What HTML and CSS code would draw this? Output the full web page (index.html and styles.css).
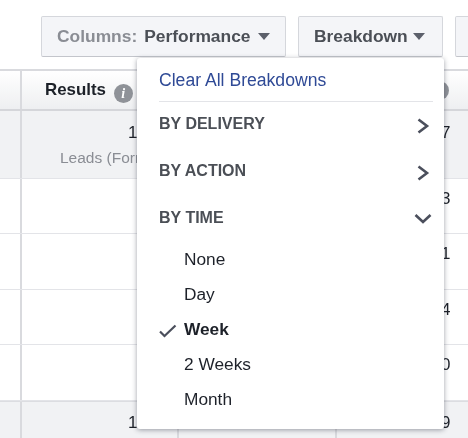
FILE: index.html
```html
<!DOCTYPE html>
<html lang="en">
<head>
<meta charset="utf-8">
<title>Breakdown menu</title>
<link rel="stylesheet" href="styles.css">
</head>
<body>
<div class="page">
  <div class="toolbar">
    <button class="btn btn-columns"><span class="muted">Columns:</span><span>Performance</span><span class="caret"></span></button>
    <button class="btn btn-breakdown"><span>Breakdown</span><span class="caret"></span></button>
    <button class="btn btn-stub"></button>
  </div>
  <div class="table">
    <div class="row head">
      <div class="c0"></div>
      <div class="c1"><b>Results</b> <span class="info">i</span></div>
      <div class="c2"></div>
      <div class="c3"><span class="info info-r"></span></div>
    </div>
    <div class="row r1 shade">
      <div class="c0"></div>
      <div class="c1"><span class="num">1</span><span class="sub">Leads (Form)</span></div>
      <div class="c2"></div>
      <div class="c3"><span class="num">7</span><span class="sub">.</span></div>
    </div>
    <div class="row r2"><div class="c0"></div><div class="c1"></div><div class="c2"></div><div class="c3"><span class="num">3</span></div></div>
    <div class="row r3"><div class="c0"></div><div class="c1"></div><div class="c2"></div><div class="c3"><span class="num">1</span></div></div>
    <div class="row r2"><div class="c0"></div><div class="c1"></div><div class="c2"></div><div class="c3"><span class="num">4</span></div></div>
    <div class="row r3"><div class="c0"></div><div class="c1"></div><div class="c2"></div><div class="c3"><span class="num">0</span></div></div>
    <div class="row total shade"><div class="c0"></div><div class="c1"><span class="num">1</span></div><div class="c2"></div><div class="c3"><span class="num">9</span></div></div>
  </div>
  <div class="menu">
    <a class="clear">Clear All Breakdowns</a>
    <div class="section first">BY DELIVERY
      <svg class="chev" width="14" height="18" viewBox="0 0 14 18"><path d="M2.500 2.500l8.500 6.500-8.500 6.500" fill="none" stroke="#4b4f5c" stroke-width="2.600"/></svg>
    </div>
    <div class="section">BY ACTION
      <svg class="chev" width="14" height="18" viewBox="0 0 14 18"><path d="M2.500 2.500l8.500 6.500-8.500 6.500" fill="none" stroke="#4b4f5c" stroke-width="2.600"/></svg>
    </div>
    <div class="section">BY TIME
      <svg class="chev down" width="18" height="12" viewBox="0 0 18 12"><path d="M1.500 2l7.500 7 7.500-7" fill="none" stroke="#4b4f5c" stroke-width="2.600"/></svg>
    </div>
    <ul class="options">
      <li>None</li>
      <li>Day</li>
      <li class="on"><svg class="check" width="18" height="14" viewBox="0 0 18 14"><path d="M1 7.500l4.500 4.500 11-10.500" fill="none" stroke="#4b4f5c" stroke-width="2.200"/></svg>Week</li>
      <li>2 Weeks</li>
      <li>Month</li>
    </ul>
  </div>
</div>
</body>
</html>
```
FILE: styles.css
```css
* { box-sizing: border-box; }
html, body { margin: 0; padding: 0; background: #fff; }
body { font-family: "Liberation Sans", Arial, sans-serif; color: #1d2129; overflow: hidden; }
.page { position: relative; width: 468px; height: 438px; overflow: hidden; filter: blur(0.35px); }

.toolbar { display: flex; gap: 12px; padding: 16px 0 0 41px; height: 69px; }
.btn {
  flex: none; height: 41px; border: 1px solid #d5d7dc; border-bottom-color: #c3c5cb; border-radius: 2px;
  background: #f4f5f8; font: bold 17.400px "Liberation Sans", Arial, sans-serif; color: #4b4f56;
  padding: 0 0 0 15px; display: flex; align-items: center; gap: 7px; white-space: pre;
}
.btn-columns { width: 245px; }
.btn-breakdown { width: 145px; gap: 5px; }
.btn-stub { width: 40px; }
.muted { color: #8a8d94; }
.caret { width: 0; height: 0; border: 6.500px solid transparent; border-top: 7px solid #5c606b; border-bottom: 0; }

.table { border-top: 2px solid #d9dade; }
.row { display: grid; grid-template-columns: 22px 157px 158px 1fr; border-bottom: 1px solid #e3e4e8; }
.row > div { border-right: 2px solid #d9dade; position: relative; }
.row > .c3 { border-right: 0; }
.head { height: 40px; background: linear-gradient(#fff, #eeeff1); border-bottom: 2px solid #d5d6da; }
.head .c1 { padding: 9px 0 0 23px; font-size: 16.900px; color: #1d2129; white-space: nowrap; }
.info {
  display: inline-block; width: 19px; height: 19px; margin-left: 3px; border-radius: 50%; background: #8f9298; color: #fff;
  font: bold italic 14px/19px "Liberation Serif", serif; text-align: center; vertical-align: -3px;
}
.info-r { position: absolute; left: 90px; top: 10px; }
.shade { background: #f1f2f4; }
.r1 { height: 68px; }
.r2 { height: 55px; }
.r3 { height: 56px; }
.total { height: 40px; border-bottom: 0; border-top: 1px solid #dcdde1; }
.num { display: block; font-size: 17px; line-height: 20px; margin-top: 10px; color: #1d2129; }
.r1 .num { margin-top: 12px; }
.sub { display: block; font-size: 15.500px; line-height: 18px; margin-top: 6px; color: #8a8d94; white-space: nowrap; }
.c1 .num { padding-left: 106px; }
.c1 .sub { padding-left: 38px; }
.c3 .num, .c3 .sub { padding-left: 104px; }
.total .num { margin-top: 11px; }

.menu {
  position: absolute; left: 137px; top: 58px; width: 307px; height: 371px; background: #fff;
  border-radius: 3px; box-shadow: 0 1px 5px rgba(40, 45, 60, 0.45); padding: 12px 11px 0 22px;
}
.clear { display: block; font-size: 17.600px; line-height: 20px; color: #2f4a96; padding-bottom: 11px; border-bottom: 1px solid #e3e4e8; }
.section {
  display: flex; justify-content: space-between; align-items: center; height: 20px; margin-top: 27px;
  font-size: 16px; font-weight: bold; color: #4b4f56;
}
.section.first { margin-top: 12px; }
.section .chev { margin: 3px 3px 0 0; }
.section .chev.down { margin: 1px 1px 0 0; }
.options { list-style: none; margin: 21px 0 0; padding: 0 0 0 25px; }
.options li { position: relative; height: 35px; line-height: 20px; font-size: 17.300px; color: #1d2129; }
.options .on { font-weight: bold; }
.check { position: absolute; left: -25px; top: 5px; }
```
